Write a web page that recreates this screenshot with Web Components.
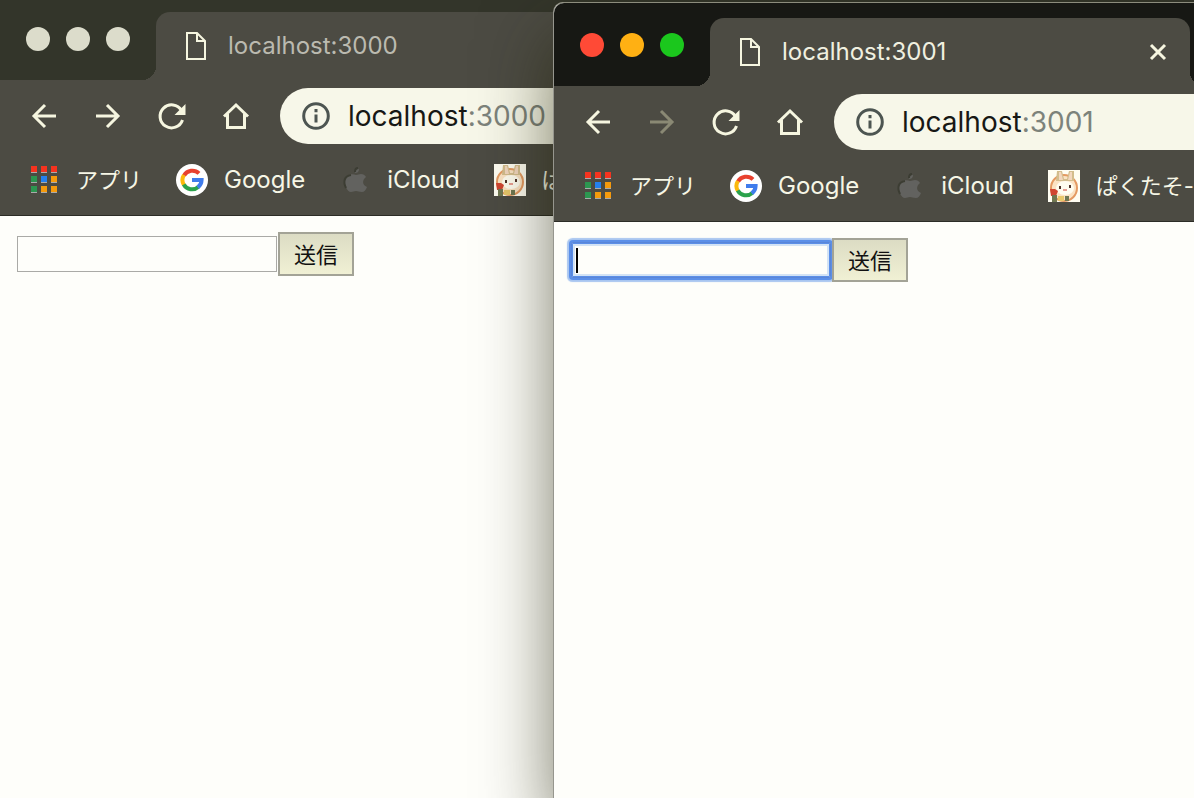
<!DOCTYPE html>
<html lang="ja">
<head>
<meta charset="utf-8">
<title>localhost</title>
<style>
  html, body { height: 100%; }
  body { margin: 0; overflow: hidden; background: #33352a; font-family: Inter, "Noto Sans CJK JP", sans-serif; }
</style>
</head>
<body>
<desk-top>
  <browser-window slot="back" host="localhost" port="3000" label="ぱ" behind><send-form></send-form></browser-window>
  <browser-window slot="front" host="localhost" port="3001" label="ぱくたそ-" active><send-form active></send-form></browser-window>
</desk-top>

<script>
const define = (name, html) => customElements.define(name, class extends HTMLElement {
  connectedCallback() {
    if (this.shadowRoot) return;
    const t = document.createElement('template');
    t.innerHTML = typeof html === 'function' ? html(this) : html;
    this.attachShadow({ mode: 'open' }).append(t.content.cloneNode(true));
  }
});

define('desk-top', `
<style>
  :host { display: grid; grid-template-columns: 554fr 640fr; min-height: 100vh; }
  div { display: grid; min-width: 0; }
  .back { overflow: hidden; }
  .front { z-index: 1; padding-top: 2px; }
</style>
<div class="back"><slot name="back"></slot></div>
<div class="front"><slot name="front"></slot></div>`);

const icons = {
  back: '<path d="M28 16H6M17 5 6 16l11 11"/>',
  forward: '<path d="M4 16h22M15 5l11 11-11 11"/>',
  reload: '<path d="M25.500 10.500A11.500 11.500 0 1 0 26.500 20"/><path d="M29.500 4v11h-11z" fill="currentColor" stroke="none"/>',
  home: '<path d="M4 16.500 16 5l12 11.500M7.500 14v13.500h17V14"/>',
  file: '<path d="M7 3h10l8 8v18H7zM17 3v8h8" stroke-width="2"/>',
  info: '<circle cx="16" cy="16" r="12.300"/><path d="M16 14.500v8M16 9v3.200"/>',
  close: '<path d="m9 9 14 14M23 9 9 23"/>',
  apps: '<g stroke="none"><path fill="#f5331f" d="M3 2h6v6H3zM13 2h6v6h-6zM23 2h6v6h-6z"/><path fill="#2c9650" d="M3 12h6v6H3zM3 22h6v6H3z"/><path fill="#2380ee" d="M13 12h6v6h-6z"/><path fill="#f59a0c" d="M23 12h6v6h-6zM13 22h6v6h-6zM23 22h6v6h-6z"/><path d="M3 8.500h6m4 0h6m4 0h6M3 18.500h6m4 0h6m4 0h6M3 28.500h6m4 0h6m4 0h6" stroke="#aaa" stroke-width="1"/></g>',
  google: '<circle cx="16" cy="16" r="16" fill="#fff" stroke="none"/><g stroke-width="4" stroke-linecap="butt"><path stroke="#e8412f" d="M8 11.500A9.600 9.600 0 0 1 23 9.400"/><path stroke="#fbb90c" d="M7.900 21A9.600 9.600 0 0 1 7.900 11"/><path stroke="#2ba24c" d="M22.300 23A9.600 9.600 0 0 1 7.700 20.500"/><path stroke="#3f7cec" d="M16 16h9.600A9.600 9.600 0 0 1 21.800 23.400"/></g>',
  apple: '<path stroke="none" fill="#62625f" d="M20 5c0 3-2 4-4 4 0-3 2-4 4-4zM17 11c2 0 3-1 5-1 2 0 4 1 5 3-4 3-4 8 1 10-1 3-3 5-5 5-3 0-4-1-6-1s-3 1-5 1c-4 0-7-8-6-12 1-5 6-7 11-5z"/><path stroke="#3c3d33" stroke-width="2" d="M7 24c-3-6-2-12 5-13M16 8c0-2 1-4 3-4"/>',
  rabbit: '<g stroke="none"><path fill="#fffdf2" d="M0 0h32v32H0z"/><circle cx="16" cy="18" r="13" fill="#fbe3c4" stroke="#e49a62" stroke-width="2"/><path fill="#d3bd8d" d="M8 11 9 1h5l2 8h3l2-8h5v10z"/><path fill="#f3d7bf" d="M11 2h2l2 8h-4zM22 2h2v8h-4z"/><ellipse cx="17" cy="18" rx="9" ry="7" fill="#fffdf0"/><path fill="#503329" d="M11 16h2v3h-2zM21 15h2v3h-2z"/><path fill="#e89e92" d="M15 19h4v2h-4z"/><path fill="#cf4531" d="M2 19h5l3 2-2 5H3z"/><path fill="#6f7752" d="M4 25h5v7H4zM17 26h4v5h-4z"/><path fill="#e8c86b" d="M10 26h6v5h-6z"/></g>'
};
define('ui-icon', el => `
<style>
  :host { display: block; flex: none; width: 32px; height: 32px; }
  svg { display: block; width: 100%; height: 100%; fill: none; stroke: currentColor; stroke-width: 3; }
</style>
<svg viewBox="0 0 32 32" aria-hidden="true">${icons[el.getAttribute('name')]}</svg>`);

define('window-lights', `
<style>
  :host { display: flex; gap: 16px; }
  button { width: 24px; height: 24px; padding: 0; border: 0; border-radius: 50%; background: var(--light, #dcdccb); }
  :host([active]) .close { --light: #ff4a36; }
  :host([active]) .min { --light: #ffb013; }
  :host([active]) .max { --light: #1bc71d; }
</style>
<button class="close" aria-label="Close window"></button><button class="min" aria-label="Minimize"></button><button class="max" aria-label="Zoom"></button>`);

define('bookmark-link', el => `
<style>
  :host { display: block; flex: none; }
  a { display: flex; align-items: center; gap: 16px; color: #f6f6e6; text-decoration: none; font-size: 24px; line-height: 32px; white-space: nowrap; }
  :host([lang="ja"]) a { font-size: 22px; }
</style>
<a href="#"><ui-icon name="${el.getAttribute('icon')}"></ui-icon><span><slot></slot></span></a>`);

define('browser-window', el => {
  const active = el.hasAttribute('active');
  const host = el.getAttribute('host'), port = el.getAttribute('port');
  return `
<style>
  :host { --frame: #33352a; --bar: #4c4b43; --ink: #f6f6e0; display: flex; flex-direction: column; min-width: 0; box-sizing: border-box; background: #fefefa; color: var(--ink); }
  :host([active]) { --frame: #171814; border-top: 1px solid #8c8c7d; border-radius: 10px 0 0 0; box-shadow: -1px 0 #96968e, 0 36px 72px rgba(30, 30, 0, .6); }
  header { display: flex; align-items: flex-end; height: 80px; background: var(--frame); }
  :host([active]) header { height: 83px; border-radius: 10px 0 0 0; }
  window-lights { padding: 0 26px 29px; }
  .tab { position: relative; flex: 1; display: flex; align-items: center; box-sizing: border-box; height: 68px; padding: 0 16px 0 24px; gap: 16px; border-radius: 14px 0 0 0; background: var(--bar); font-size: 24px; line-height: 32px; color: #bbbab0; }
  :host([active]) .tab { margin-right: 4px; border-radius: 14px 14px 0 0; color: #f0f0e0; }
  .tab::before, .tab::after { content: ""; position: absolute; bottom: 0; width: 14px; height: 14px; }
  .tab::before { right: 100%; background: radial-gradient(circle at 0 0, transparent 14px, var(--bar) 14px); }
  .tab::after { left: 100%; background: radial-gradient(circle at 100% 0, transparent 14px, var(--bar) 14px); }
  .tab ui-icon { color: var(--ink); }
  .tab span { flex: 1; }
  button { padding: 0; border: 0; background: none; color: inherit; font: inherit; }
  button:disabled { color: #8a8974; }
  nav { display: flex; align-items: center; background: var(--bar); overflow: hidden; }
  .tools { padding: 8px 0 8px 28px; gap: 32px; }
  .address { flex: 1; display: flex; align-items: center; min-width: 0; height: 56px; margin-left: -4px; padding-left: 20px; gap: 16px; border-radius: 28px 0 0 28px; background: #f7f7e9; color: #4d5551; font-size: 28px; line-height: 36px; white-space: nowrap; }
  .address b { font-weight: 400; color: #171815; }
  .address span { color: #7d837b; }
  .marks { height: 64px; box-sizing: border-box; padding: 0 0 7px 28px; gap: 34px; border-bottom: 1px solid #2c2c26; }
  main { flex: 1; padding: 16px; }
</style>
<header>
  <window-lights ${active ? 'active' : ''}></window-lights>
  <div class="tab"><ui-icon name="file"></ui-icon><span>${host}:${port}</span>${active ? '<button aria-label="Close tab"><ui-icon name="close"></ui-icon></button>' : ''}</div>
</header>
<nav class="tools" aria-label="Navigation">
  <button aria-label="Back"><ui-icon name="back"></ui-icon></button>
  <button aria-label="Forward" ${active ? 'disabled' : ''}><ui-icon name="forward"></ui-icon></button>
  <button aria-label="Reload"><ui-icon name="reload"></ui-icon></button>
  <button aria-label="Home"><ui-icon name="home"></ui-icon></button>
  <div class="address"><ui-icon name="info"></ui-icon><div><b>${host}</b><span>:${port}</span></div></div>
</nav>
<nav class="marks" aria-label="Bookmarks">
  <bookmark-link icon="apps" lang="ja">アプリ</bookmark-link>
  <bookmark-link icon="google">Google</bookmark-link>
  <bookmark-link icon="apple">iCloud</bookmark-link>
  <bookmark-link icon="rabbit" lang="ja">${el.getAttribute('label')}</bookmark-link>
</nav>
<main><slot></slot></main>`;
});

define('send-form', `
<style>
  :host { display: block; }
  form { display: flex; align-items: center; }
  input { box-sizing: border-box; width: 260px; height: 36px; margin: 0 1px; padding: 4px 6px; border: 1px solid #aaaaa6; background: #fefefa; font: 22px Inter, sans-serif; outline: none; }
  :host([active]) input { border-color: #5a86d8; border-radius: 2px; box-shadow: 0 0 0 2px #5b8fe8, 0 0 1px 4px #a9c6f0, inset 0 0 0 1px #5b8fe8, inset 0 0 0 3px #d3e3f5; background: linear-gradient(#000, #000) 4px 5px / 2px 25px no-repeat #fefefa; }
  button { position: relative; box-sizing: border-box; width: 76px; height: 44px; padding: 0 0 2px; border: 2px solid #a3a396; background: linear-gradient(#dcdcc4, #f0f0d4); color: #111; font: 22px/32px "Noto Sans CJK JP", sans-serif; }
</style>
<form><input type="text" aria-label="メッセージ"><button type="button">送信</button></form>`);
</script>
</body>
</html>
